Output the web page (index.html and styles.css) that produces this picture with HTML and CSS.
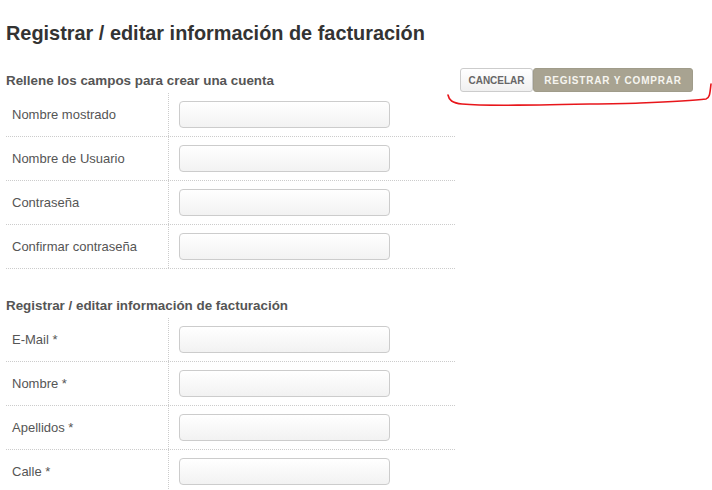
FILE: index.html
```html
<!DOCTYPE html>
<html lang="es">

<head>
    <meta charset="UTF-8">
    <title>Registrar / editar información de facturación</title>
    <link rel="stylesheet" href="styles.css">
</head>

<body>
    <div class="page">
        <h1>Registrar / editar información de facturación</h1>

        <div class="checkout">
            <div class="forms">
                <h3>Rellene los campos para crear una cuenta</h3>
                <div class="fields">
                    <div class="row"><label>Nombre mostrado</label><div class="cell"><input type="text"></div></div>
                    <div class="row"><label>Nombre de Usuario</label><div class="cell"><input type="text"></div></div>
                    <div class="row"><label>Contraseña</label><div class="cell"><input type="password"></div></div>
                    <div class="row"><label>Confirmar contraseña</label><div class="cell"><input type="password"></div></div>
                </div>

                <h3 class="second">Registrar / editar información de facturación</h3>
                <div class="fields">
                    <div class="row"><label>E-Mail *</label><div class="cell"><input type="text"></div></div>
                    <div class="row"><label>Nombre *</label><div class="cell"><input type="text"></div></div>
                    <div class="row"><label>Apellidos *</label><div class="cell"><input type="text"></div></div>
                    <div class="row"><label>Calle *</label><div class="cell"><input type="text"></div></div>
                </div>
            </div>

            <div class="actions">
                <button class="btn-cancel">CANCELAR</button>
                <button class="btn-buy">REGISTRAR Y COMPRAR</button>
            </div>
        </div>

        <!-- red pen mark under the buttons -->
        <svg class="scribble" width="272" height="40" viewBox="0 0 272 40">
            <path d="M8 15 C9 20 12 23 22 24 C45 26 70 25 100 25 C140 24 170 24 200 23 C225 22 250 21 266 19 C270 18 270 12 271 4"
                fill="none" stroke="#e8161b" stroke-width="1.6" stroke-linecap="round" />
        </svg>
    </div>
</body>

</html>
```

FILE: styles.css
```css
body {
    margin: 0;
    background: #fff;
    font-family: "Liberation Sans", Arial, sans-serif;
    color: #555;
}

.page {
    position: relative;
    padding: 0 6px;
    height: 490px;
    overflow: hidden;
}

h1 {
    margin: 21px 0 23px;
    font-size: 19.9px;
    line-height: 24px;
    color: #333;
}

.checkout {
    display: flex;
    align-items: flex-start;
}

.forms {
    width: 449px;
    padding-top: 1px;
}

.forms h3 {
    margin: 0;
    font-size: 13.4px;
    line-height: 24px;
    color: #555;
}

.forms h3.second {
    margin-top: 25px;
}

.row {
    display: flex;
    height: 44px;
    border-bottom: 1px dotted #ccc;
    box-sizing: border-box;
}

.row label {
    width: 156px;
    padding-left: 6px;
    display: flex;
    align-items: center;
    font-size: 13px;
    color: #555;
}

.row .cell {
    border-left: 1px dotted #ccc;
    padding-left: 10px;
    display: flex;
    align-items: center;
}

.row input {
    width: 211px;
    height: 27px;
    box-sizing: border-box;
    border: 1px solid #ccc;
    border-radius: 4px;
    background: linear-gradient(#fff, #f2f2f2);
    margin: 0;
}

.actions {
    display: flex;
    margin-left: 5px;
}

.actions button {
    height: 24px;
    font-family: "Liberation Sans", Arial, sans-serif;
    font-weight: bold;
    font-size: 10px;
    border-radius: 3px;
    cursor: pointer;
    padding: 0;
}

.btn-cancel {
    width: 73px;
    background: linear-gradient(#fff, #f0f0f0);
    border: 1px solid #ccc;
    color: #666;
}

.btn-buy {
    width: 160px;
    background: #a8a391;
    border: 1px solid #a09c8a;
    color: #f6f5ef;
    font-size: 10.5px;
    letter-spacing: 0.8px;
}

.scribble {
    position: absolute;
    left: 440px;
    top: 80px;
}
```
